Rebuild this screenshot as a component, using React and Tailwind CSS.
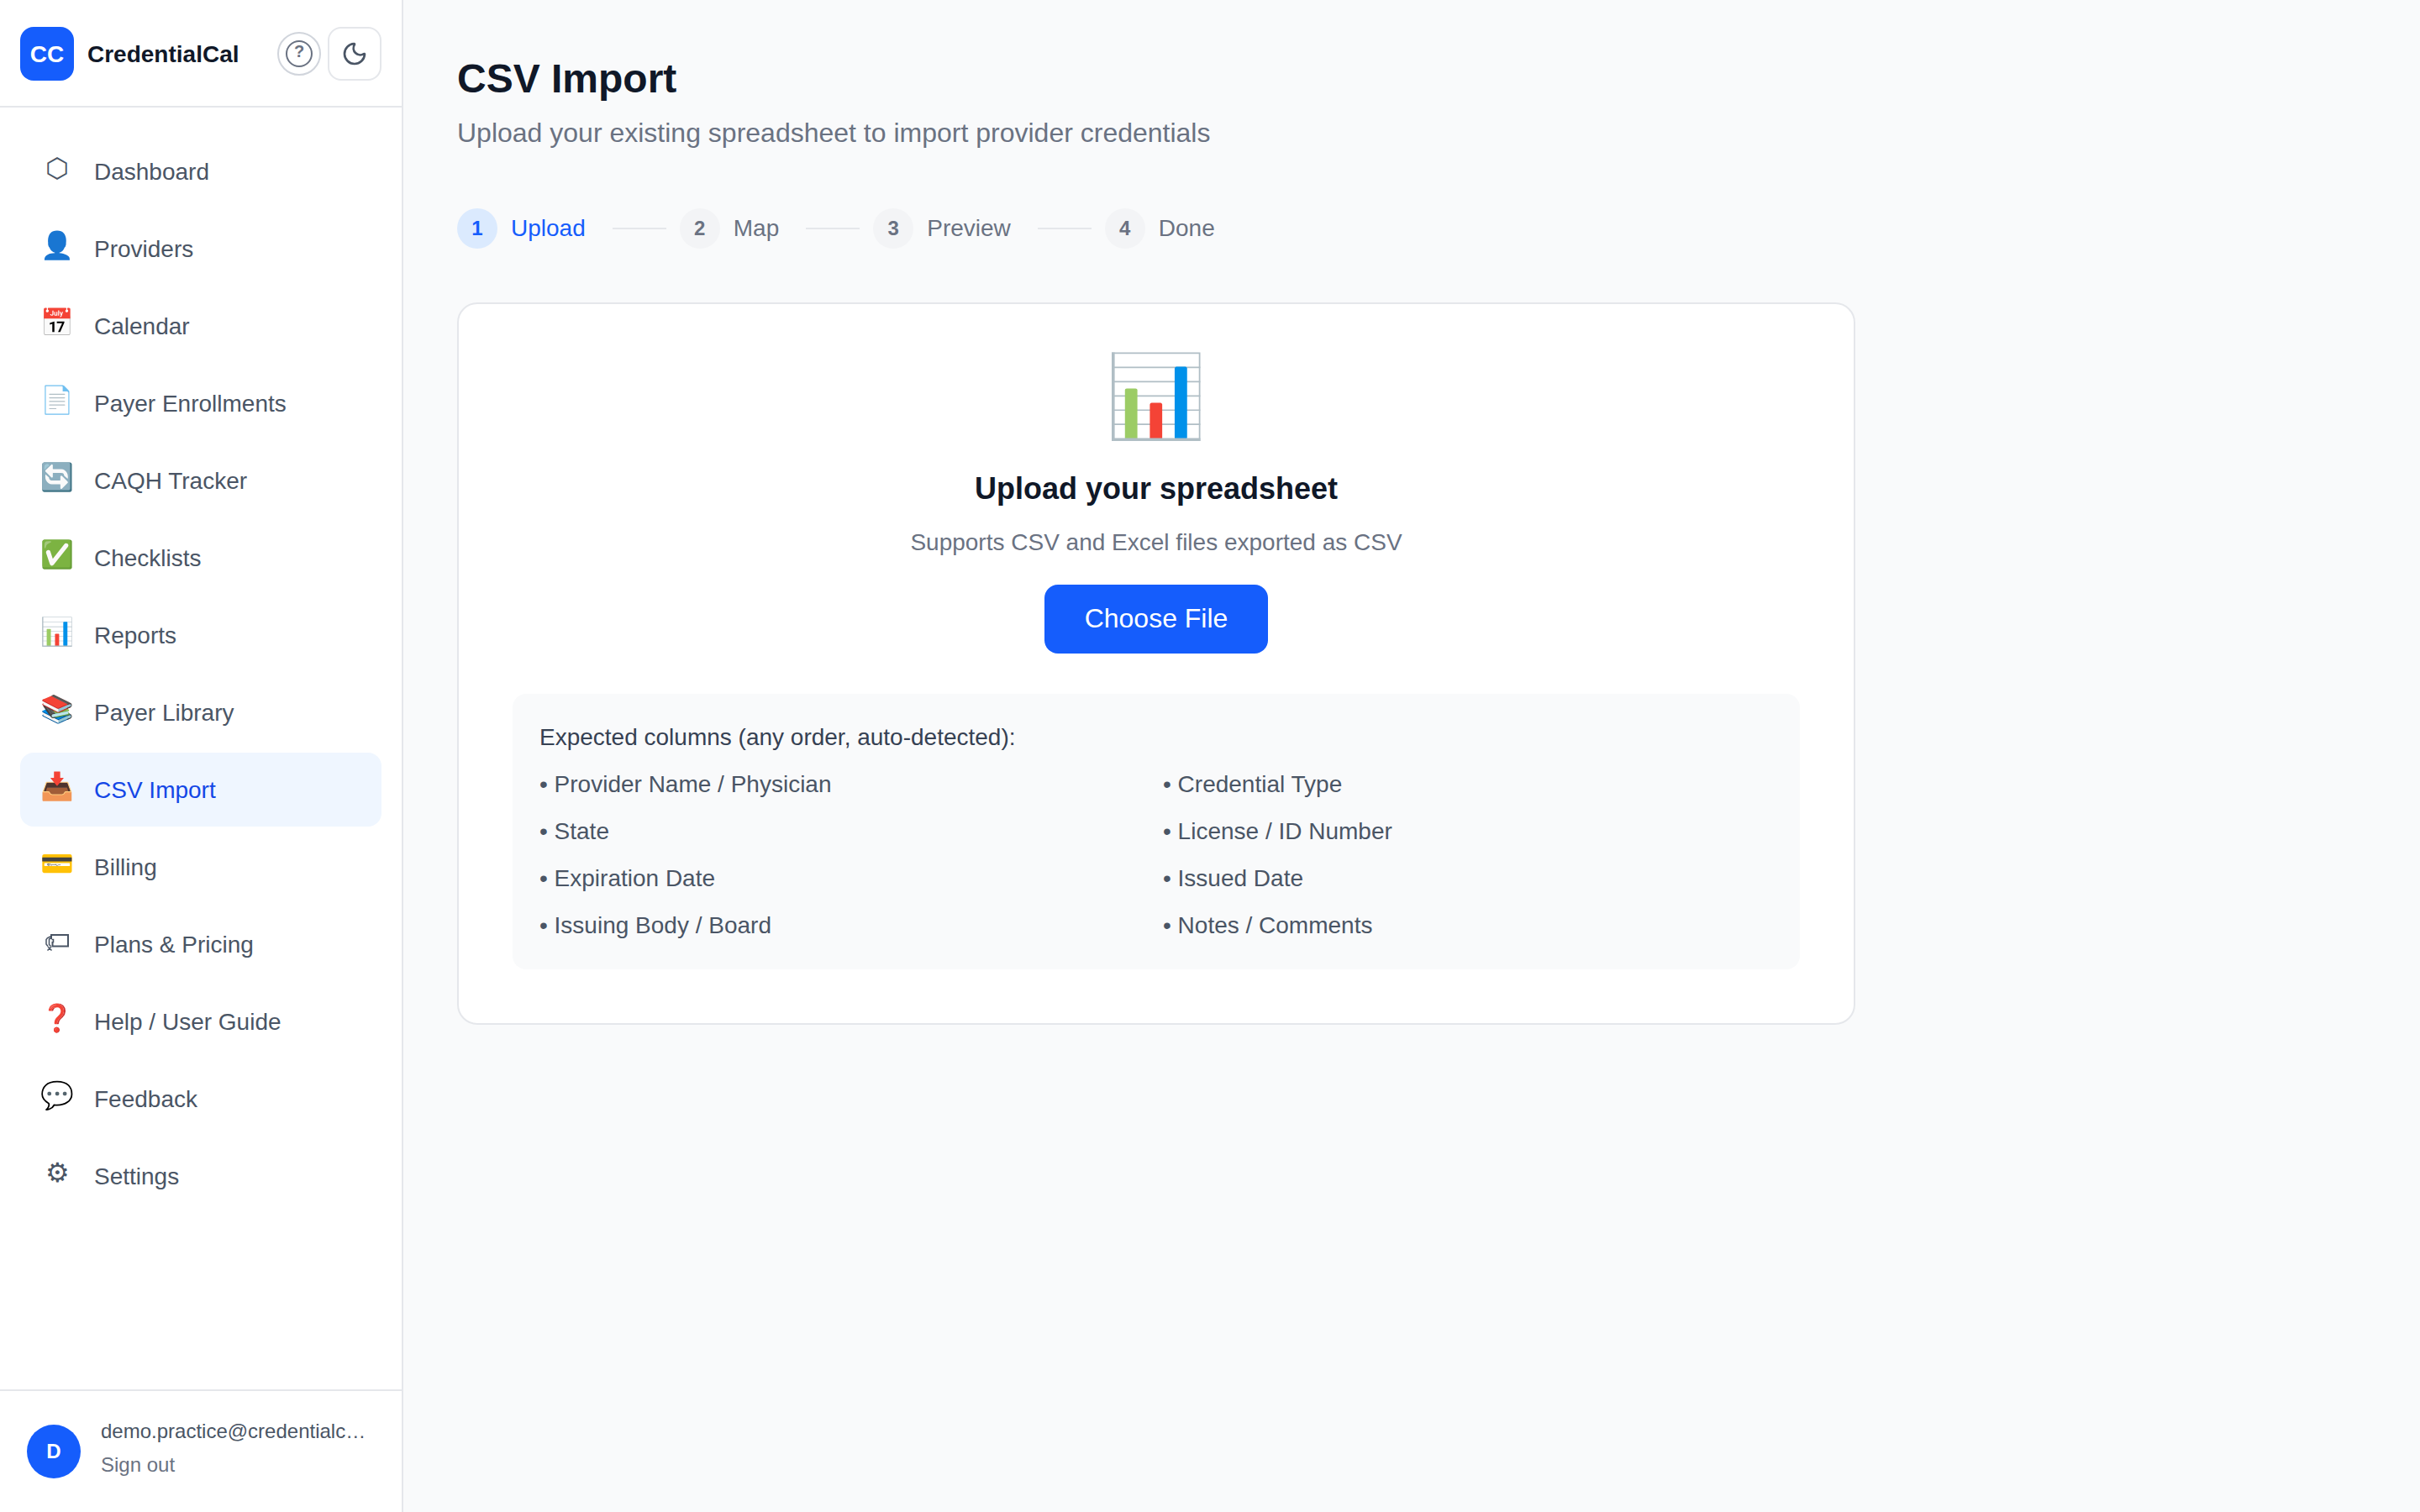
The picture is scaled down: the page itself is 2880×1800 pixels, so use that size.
import { useRef, useState } from "react";
import { Moon } from "lucide-react";

// Small price tag with its string on the left
function TagIcon() {
  return (
    <svg width="32" height="24" viewBox="8 8 32 24" fill="none" stroke="currentColor" strokeWidth="2">
      <path d="M17 18V13H37V26.500H18.500V22" />
      <path d="M17 14.500L12.500 16.500L11 18.500V24L13 26.500" strokeWidth="1.500" />
      <path d="M17 16.500L14.500 18V24.500L16.500 26.500" strokeWidth="1.500" />
      <path d="M17.500 18.500H19.500V21.500H17.500" strokeWidth="1.500" />
      <path d="M12.500 31.500L15 29L17.500 31.500M13 27L15 29L17 27" strokeWidth="1.500" />
    </svg>
  );
}

const navItems = [
  { icon: "⬡", label: "Dashboard" },
  { icon: "👤", label: "Providers" },
  { icon: "📅", label: "Calendar" },
  { icon: "📄", label: "Payer Enrollments" },
  { icon: "🔄", label: "CAQH Tracker" },
  { icon: "✅", label: "Checklists" },
  { icon: "📊", label: "Reports" },
  { icon: "📚", label: "Payer Library" },
  { icon: "📥", label: "CSV Import" },
  { icon: "💳", label: "Billing" },
  { icon: <TagIcon />, label: "Plans & Pricing" },
  { icon: "❓", label: "Help / User Guide" },
  { icon: "💬", label: "Feedback" },
  { icon: "⚙", label: "Settings" },
];

const steps = ["Upload", "Map", "Preview", "Done"];

const columns = [
  "Provider Name / Physician",
  "Credential Type",
  "State",
  "License / ID Number",
  "Expiration Date",
  "Issued Date",
  "Issuing Body / Board",
  "Notes / Comments",
];

function Sidebar() {
  const [active, setActive] = useState("CSV Import");

  return (
    <aside className="sticky top-0 flex h-screen w-[480px] shrink-0 flex-col border-r-2 border-gray-200 bg-white">
      {/* Brand */}
      <div className="flex h-32 shrink-0 items-center justify-between border-b-2 border-gray-200 px-6 pt-0.5">
        <div className="flex items-center gap-4">
          <div className="flex size-16 items-center justify-center rounded-2xl bg-blue-600 pt-0.5 text-[28px] leading-10 font-bold text-white">
            CC
          </div>
          <span className="pt-0.5 text-[28px] leading-10 font-bold text-gray-900">CredentialCal</span>
        </div>

        <div className="flex items-center gap-2">
          <button
            aria-label="Help"
            className="flex size-[52px] items-center justify-center rounded-full border-2 border-gray-300 text-gray-500 hover:bg-gray-50"
          >
            <span className="flex size-8 items-start justify-center rounded-full border-2 border-gray-500 text-xl leading-[22px] font-bold">
              ?
            </span>
          </button>
          <button
            aria-label="Toggle dark mode"
            className="flex size-16 items-center justify-center rounded-2xl border-2 border-gray-200 text-gray-600 hover:bg-gray-50"
          >
            <Moon size={32} />
          </button>
        </div>
      </div>

      {/* Navigation */}
      <nav className="flex flex-1 flex-col gap-1 overflow-y-auto px-6 py-8">
        {navItems.map((item) => (
          <a
            key={item.label}
            href="#"
            onClick={() => setActive(item.label)}
            className={`flex h-[88px] shrink-0 items-center gap-6 rounded-2xl px-6 text-[28px] leading-10 ${
              active === item.label
                ? "bg-blue-50 text-blue-700"
                : "text-gray-600 hover:bg-gray-50"
            }`}
          >
            <span className="flex w-10 justify-center pb-2 text-[32px] leading-[48px]">
              {item.icon}
            </span>
            <span className="pt-0.5">{item.label}</span>
          </a>
        ))}
      </nav>

      {/* Account */}
      <div className="flex shrink-0 items-center gap-6 border-t-2 border-gray-200 p-8">
        <div className="flex size-16 shrink-0 items-center justify-center rounded-full bg-blue-600 text-2xl font-bold text-white">
          D
        </div>
        <div className="min-w-0 flex-1">
          <p className="truncate text-2xl leading-8 text-gray-600">
            demo.practice@credentialcal.com
          </p>
          <button className="block text-2xl leading-[48px] text-gray-500 hover:text-gray-700">
            Sign out
          </button>
        </div>
      </div>
    </aside>
  );
}

function Stepper({ current }) {
  return (
    <ol className="flex items-center gap-4">
      {steps.map((step, i) => (
        <li key={step} className="flex items-center gap-4">
          <span
            className={`flex size-12 items-center justify-center rounded-full text-2xl font-bold ${
              i === current ? "bg-blue-100 text-blue-600" : "bg-gray-100 text-gray-500"
            }`}
          >
            {i + 1}
          </span>
          <span
            className={`text-[28px] leading-10 ${i === current ? "text-blue-600" : "text-gray-500"}`}
          >
            {step}
          </span>
          {i < steps.length - 1 && <span className="ml-4 h-0.5 w-16 bg-gray-200" />}
        </li>
      ))}
    </ol>
  );
}

function UploadCard() {
  const fileRef = useRef(null);

  return (
    <section className="rounded-3xl border-2 border-gray-200 bg-white p-16">
      <div className="flex flex-col items-center text-center">
        <div className="text-8xl leading-[92px]">📊</div>
        <h2 className="mt-9 text-4xl leading-[56px] font-bold text-gray-900">
          Upload your spreadsheet
        </h2>
        <p className="mt-4 text-[28px] leading-10 text-gray-500">
          Supports CSV and Excel files exported as CSV
        </p>
        <input ref={fileRef} type="file" accept=".csv" aria-label="Spreadsheet file" className="hidden" />
        <button
          onClick={() => fileRef.current.click()}
          className="mt-[30px] rounded-2xl bg-blue-600 px-12 pt-4 pb-[18px] text-[32px] leading-[48px] text-white hover:bg-blue-700"
        >
          Choose File
        </button>
      </div>

      <div className="mt-12 rounded-2xl bg-gray-50 p-8 text-[28px] leading-10">
        <p className="text-gray-700">Expected columns (any order, auto-detected):</p>
        <ul className="mt-4 grid grid-cols-2 gap-4 text-gray-600">
          {columns.map((col) => (
            <li key={col}>• {col}</li>
          ))}
        </ul>
      </div>
    </section>
  );
}

export default function App() {
  return (
    <div className="flex min-h-screen bg-gray-50 font-['Liberation_Sans',Arial,sans-serif]">
      <Sidebar />

      <main className="min-w-0 flex-1">
        <div className="max-w-[1792px] p-16">
          <h1 className="text-5xl leading-[60px] font-bold text-gray-900">CSV Import</h1>
          <p className="mt-2 text-[32px] leading-[52px] text-gray-500">
            Upload your existing spreadsheet to import provider credentials
          </p>

          <div className="my-16">
            <Stepper current={0} />
          </div>

          <UploadCard />
        </div>
      </main>
    </div>
  );
}
